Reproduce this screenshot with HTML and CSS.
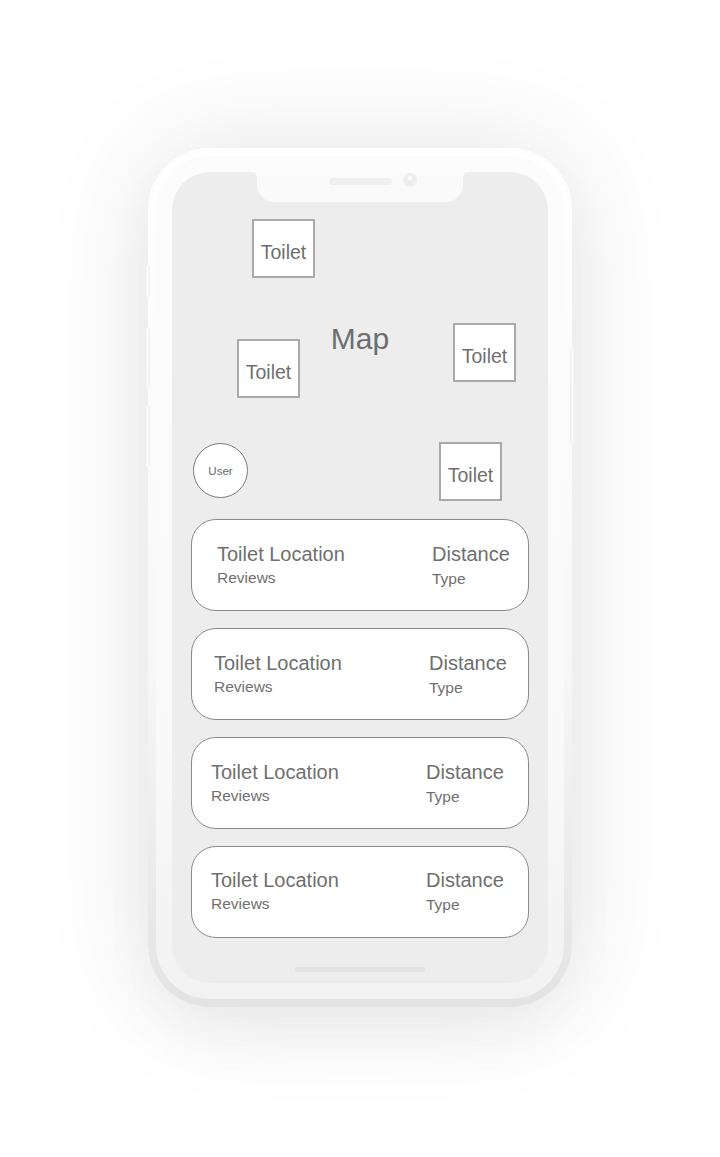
FILE: index.html
```html
<!DOCTYPE html>
<html lang="en">
<head>
<meta charset="utf-8">
<title>Toilet Finder</title>
<link rel="stylesheet" href="styles.css">
</head>
<body>
<div class="phone">
  <span class="side-btn btn-l1"></span>
  <span class="side-btn btn-l2"></span>
  <span class="side-btn btn-l3"></span>
  <span class="side-btn btn-r1"></span>
  <div class="bezel">
    <div class="screen">
      <div class="notch">
        <span class="speaker"></span>
        <span class="camera"></span>
      </div>
      <div class="map">
        <div class="map-label">Map</div>
        <div class="marker m1">Toilet</div>
        <div class="marker m2">Toilet</div>
        <div class="marker m3">Toilet</div>
        <div class="marker m4">Toilet</div>
        <div class="user">User</div>
      </div>
      <div class="list">
        <div class="card c1">
          <div class="col">
            <div class="title">Toilet Location</div>
            <div class="sub">Reviews</div>
          </div>
          <div class="col">
            <div class="title">Distance</div>
            <div class="sub sub-r">Type</div>
          </div>
        </div>
        <div class="card c2">
          <div class="col">
            <div class="title">Toilet Location</div>
            <div class="sub">Reviews</div>
          </div>
          <div class="col">
            <div class="title">Distance</div>
            <div class="sub sub-r">Type</div>
          </div>
        </div>
        <div class="card c3">
          <div class="col">
            <div class="title">Toilet Location</div>
            <div class="sub">Reviews</div>
          </div>
          <div class="col">
            <div class="title">Distance</div>
            <div class="sub sub-r">Type</div>
          </div>
        </div>
        <div class="card c4">
          <div class="col">
            <div class="title">Toilet Location</div>
            <div class="sub">Reviews</div>
          </div>
          <div class="col">
            <div class="title">Distance</div>
            <div class="sub sub-r">Type</div>
          </div>
        </div>
      </div>
      <div class="home"></div>
    </div>
  </div>
</div>
</body>
</html>
```
FILE: styles.css
```css
* { box-sizing: border-box; }

html, body {
  margin: 0;
  padding: 0;
  background: #ffffff;
}

body {
  height: 1157px;
  overflow: hidden;
  display: flex;
  justify-content: center;
  align-items: flex-start;
  padding-top: 148px;
  font-family: "Liberation Sans", Arial, sans-serif;
  color: #6f6f6f;
}

.phone {
  position: relative;
  width: 424px;
  height: 859px;
  padding: 8px;
  border-radius: 62px;
  background: linear-gradient(180deg, #ffffff 0%, #f7f7f7 60%, #e3e3e3 100%);
  box-shadow: 0 0 110px rgba(0, 0, 0, 0.11), 0 30px 60px rgba(0, 0, 0, 0.03);
}

.side-btn {
  position: absolute;
  width: 5px;
  border-radius: 2px;
  background: linear-gradient(90deg, #ececec, #fbfbfb 50%, #eeeeee);
}
.btn-l1 { left: -3px; top: 117px; height: 32px; }
.btn-l2 { left: -3px; top: 180px; height: 60px; }
.btn-l3 { left: -3px; top: 258px; height: 61px; }
.btn-r1 { right: -3px; top: 200px; height: 96px; }

.bezel {
  height: 100%;
  padding: 16px;
  border-radius: 54px;
  background: linear-gradient(180deg, #fcfcfc 0%, #f9f9f9 70%, #f2f2f2 100%);
}

.screen {
  position: relative;
  height: 100%;
  border-radius: 38px;
  background: #ededed;
  display: flex;
  flex-direction: column;
  overflow: hidden;
}

.notch {
  position: absolute;
  top: 0;
  left: 85px;
  width: 206px;
  height: 30px;
  background: #fafafa;
  border-radius: 0 0 17px 17px;
  z-index: 2;
}
.notch::before,
.notch::after {
  content: "";
  position: absolute;
  top: 0;
  width: 6px;
  height: 6px;
}
.notch::before {
  left: -6px;
  background: radial-gradient(circle at 0 100%, transparent 5.5px, #fafafa 6px);
}
.notch::after {
  right: -6px;
  background: radial-gradient(circle at 100% 100%, transparent 5.5px, #fafafa 6px);
}

.speaker {
  position: absolute;
  left: 72px;
  top: 6px;
  width: 63px;
  height: 7px;
  border-radius: 4px;
  background: #efefef;
}
.camera {
  position: absolute;
  left: 146px;
  top: 1px;
  width: 14px;
  height: 14px;
  border-radius: 50%;
  background: radial-gradient(circle at 50% 35%, #fafafa 0 2px, #ebebeb 3px, #eeeeee 100%);
  box-shadow: inset 0 0 0 1px #f1f1f1;
}

.map {
  position: relative;
  flex: none;
  height: 347px;
}

.map-label {
  position: absolute;
  left: 0;
  right: 0;
  top: 152px;
  text-align: center;
  font-size: 30px;
  line-height: 1;
  color: #6e6e6e;
}

.marker {
  position: absolute;
  width: 63px;
  height: 59px;
  border: 2px solid #a9a9a9;
  background: #ffffff;
  display: flex;
  justify-content: center;
  align-items: center;
  padding-top: 8px;
  font-size: 19.5px;
  color: #6f6f6f;
}
.m1 { left: 80px; top: 47px; }
.m2 { left: 65px; top: 167px; }
.m3 { left: 281px; top: 151px; }
.m4 { left: 267px; top: 270px; }

.user {
  position: absolute;
  left: 21px;
  top: 271px;
  width: 55px;
  height: 55px;
  border: 1px solid #7a7a7a;
  border-radius: 50%;
  background: #ffffff;
  display: flex;
  justify-content: center;
  align-items: center;
  font-size: 11.5px;
  color: #6a6a6a;
}

.list {
  display: flex;
  flex-direction: column;
  gap: 17px;
  padding: 0 19px;
}

.card {
  height: 92px;
  border: 1px solid #8a8a8a;
  border-radius: 25px;
  background: #ffffff;
  display: grid;
  grid-template-columns: 215px 1fr;
  align-items: start;
  padding-top: 23px;
}
.c1 { padding-left: 25px; }
.c2 { padding-left: 22px; }
.c3 { padding-left: 19px; }
.c4 { padding-left: 19px; padding-top: 22px; }

.title {
  font-size: 20px;
  line-height: 22px;
  color: #6f6f6f;
  white-space: nowrap;
}
.sub {
  font-size: 15.5px;
  line-height: 25px;
  color: #707070;
  white-space: nowrap;
}
.sub-r {
  line-height: 28px;
}

.home {
  margin-top: auto;
  margin-bottom: 11px;
  align-self: center;
  width: 130px;
  height: 5px;
  border-radius: 3px;
  background: #e2e2e2;
}
```
